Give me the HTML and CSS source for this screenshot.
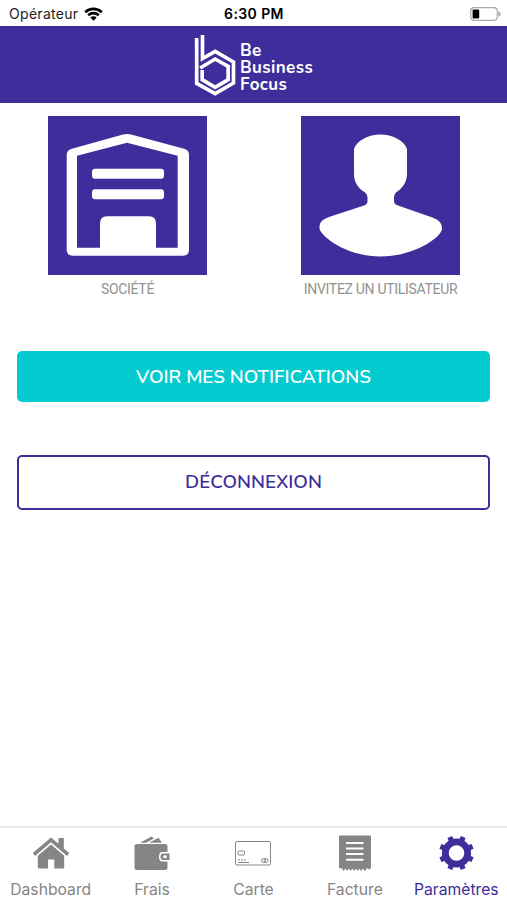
FILE: index.html
```html
<!DOCTYPE html>
<html lang="fr">
<head>
    <meta charset="UTF-8">
    <meta name="viewport" content="width=device-width, initial-scale=1.0">
    <title>Be Business Focus</title>
    <link rel="stylesheet" href="styles.css">
</head>
<body>

    <div class="status-bar">
        <div class="carrier">
            <span>Opérateur</span>
            <svg class="wifi" viewBox="0 0 19 14">
                <path d="M1.2 5.2a12 12 0 0 1 16.6 0M4.2 8.2a7.8 7.8 0 0 1 10.6 0"/>
                <path class="wifi-dot" d="M9.5 13.7L6.3 10.6a4.6 4.6 0 0 1 6.4 0z"/>
            </svg>
        </div>
        <div class="time">6:30 PM</div>
        <svg class="battery" viewBox="0 0 32 14">
            <rect x="1.7" y=".7" width="26.6" height="12.6" rx="3.5" fill="#fff" stroke="#aaa" stroke-width="1.2"/>
            <rect x="3.6" y="2.6" width="6.6" height="8.8" rx="1" fill="#000"/>
            <path d="M29.3 4.2q2.6 1 2.6 2.8t-2.6 2.8z" fill="#aaa"/>
        </svg>
    </div>

    <header class="header">
        <svg class="logo" viewBox="585 100 125 186">
            <path d="M592.5 112V248L648 279L703 247V184L648 152L610 174V103"/>
            <path d="M603 202L648 175L687 197V237L648 260L609 237V208"/>
        </svg>
        <div class="brand">
            <span>Be</span>
            <span>Business</span>
            <span>Focus</span>
        </div>
    </header>

    <main class="content">
        <div class="tiles">
            <a class="tile">
                <svg class="tile-icon" viewBox="0 0 159 159">
                    <path fill-rule="evenodd" d="M18.700 39Q18.700 34.500 23 33L75 18.500Q79 17.400 83 18.500L137 33Q141 34.500 141 39V134Q141 139.700 135 139.700H25Q18.700 139.700 18.700 134ZM29 39.700V131.700H129.700V39.700L79 26.700Z"/>
                    <rect x="44" y="52.700" width="72" height="10" rx="3"/>
                    <rect x="44" y="73.300" width="72" height="10" rx="3"/>
                    <path d="M52 134V107.500Q52 100.300 59 100.300H101Q108 100.300 108 107.500V134Z"/>
                </svg>
                <span class="tile-label">SOCIÉTÉ</span>
            </a>
            <a class="tile">
                <svg class="tile-icon" viewBox="0 0 159 159">
                    <path d="M53 33C56 24 68 18.500 79.500 18.500S103 24 106 33V58C106 66 101 73 95.500 76Q93 78 93 81V85Q93 88 97 89.500L127 100C136 103 141 105 141 113C141 120 115 140.500 79.500 140.500S18.500 119 18.500 112C18.500 105 22 103 31 100L63 89.500Q66.500 88 66.500 85V81Q66.500 78 63.500 76C57 72 53 66 53 58Z"/>
                </svg>
                <span class="tile-label">INVITEZ UN UTILISATEUR</span>
            </a>
        </div>

        <button class="btn btn-notifications">VOIR MES NOTIFICATIONS</button>
        <button class="btn btn-logout">DÉCONNEXION</button>
    </main>

    <nav class="tab-bar">
        <a class="tab">
            <svg class="tab-icon" viewBox="0 0 38 38">
                <path d="M.8 19L19 3.500L26.500 9.800V4H31.800V14.500L37.200 19L35 22L19 8.300L3 22Z"/>
                <path d="M5.800 21.800L19 10.500L32.200 21.800V33Q32.200 34.500 30.700 34.500H22.300V25.500H16V34.500H7.300Q5.800 34.500 5.800 33Z"/>
            </svg>
            <span>Dashboard</span>
        </a>
        <a class="tab">
            <svg class="tab-icon" viewBox="0 0 38 38">
                <path d="M7 8.800L18.500 2.500L21 4.500L13 8.800Z"/>
                <path d="M16 8.800L25.500 3.800L29 8.800Z"/>
                <path d="M4 10H32Q34.500 10 34.500 12.500V18H29.500Q26 18 26 22.800T29.500 27.500H34.500V33.500Q34.500 36 32 36H4Q1.500 36 1.500 33.500V12.500Q1.500 10 4 10Z"/>
                <path d="M30 19.500H36.500V26H30Q27.500 26 27.500 22.800T30 19.500Z"/>
                <rect x="30.300" y="21.300" width="3.500" height="3" rx="1.200" fill="#fff"/>
            </svg>
            <span>Frais</span>
        </a>
        <a class="tab">
            <svg class="tab-icon" viewBox="0 0 38 38">
                <g fill="none" stroke="#858585" stroke-width="1">
                    <rect x="1.500" y="7.500" width="35" height="23.500" rx="1.500"/>
                    <rect x="4" y="17" width="6.500" height="4" rx="1"/>
                    <circle cx="29.500" cy="26.500" r="2"/>
                    <circle cx="32" cy="26.500" r="2"/>
                    <path d="M4 26H6M7 26H9M10 26H12M4 28.500H15"/>
                </g>
            </svg>
            <span>Carte</span>
        </a>
        <a class="tab">
            <svg class="tab-icon" viewBox="0 0 38 38">
                <path d="M4 1.500H34Q35 1.500 35 2.500V34L33 35.500L31 34L30 36L28.500 37L27 34.500L25 37L23.500 34.500L21.500 37L20 34.500L18 37L16.500 34.500L14.500 37L13 34.500L11 37L9.500 34.500L7.500 37L6 34.500L3 34V2.500Q3 1.500 4 1.500Z"/>
                <path d="M10 9H27.500M10 14.500H27.500M10 20H27.500M10 25.800H27.500" stroke="#fff" stroke-width="2"/>
            </svg>
            <span>Facture</span>
        </a>
        <a class="tab active">
            <svg class="tab-icon" viewBox="0 0 38 38">
                <circle cx="19.500" cy="19" r="11.200" fill="none" stroke="#3d2e9c" stroke-width="6.800"/>
                <path d="M14.500 7L12.800 2.900M24.500 7L26.200 2.900M14.500 31L12.800 35.100M24.500 31L26.200 35.100M7.500 14L3.400 12.300M7.500 24L3.400 25.700M31.500 14L35.600 12.300M31.500 24L35.600 25.700" stroke="#3d2e9c" stroke-width="5.200"/>
            </svg>
            <span>Paramètres</span>
        </a>
    </nav>

</body>
</html>
```

FILE: styles.css
```css
* { box-sizing: border-box; }
body { margin: 0; height: 900px; display: flex; flex-direction: column; background: #fff; font-family: Inter, sans-serif; overflow: hidden; }

.status-bar { height: 26px; display: grid; grid-template-columns: 1fr auto 1fr; align-items: center; padding: 1px 6px 0 9px; font-size: 14px; color: #222; }
.carrier { display: flex; align-items: center; gap: 6px; letter-spacing: 0.3px; }
.wifi { width: 19px; height: 14px; fill: none; stroke: #000; stroke-width: 2.6; }
.wifi-dot { fill: #000; stroke: none; }
.time { font-weight: 600; color: #000; letter-spacing: 0.4px; margin-left: -2px; }
.battery { width: 32px; height: 14px; justify-self: end; }

.header { height: 77px; display: flex; justify-content: center; background: #3d2e9c; padding-top: 8px; gap: 4px; }
.logo { width: 42px; height: 62px; fill: none; stroke: #fff; stroke-width: 11; }
.brand { display: flex; flex-direction: column; color: #fff; font-family: Nunito, Lato, sans-serif; font-weight: 700; font-size: 17px; line-height: 17px; padding-top: 8px; width: 73px; letter-spacing: 0.4px; }

.content { flex: 1; padding: 13px 17px 0; }
.tiles { display: grid; grid-template-columns: 159px 159px; justify-content: center; column-gap: 94px; margin-left: 1px; }
.tile { display: flex; flex-direction: column; align-items: center; }
.tile-icon { width: 159px; height: 159px; background: #3d2e9c; fill: #fff; }
.tile-label { font-family: Roboto, sans-serif; font-size: 14px; line-height: 16px; margin-top: 6px; color: #929292; letter-spacing: -0.3px; white-space: nowrap; }

.btn { display: block; width: 100%; font-family: Nunito, Lato, sans-serif; font-weight: 650; font-size: 18.8px; border-radius: 5px; }
.btn-notifications { height: 51px; margin-top: 54px; border: none; background: #04cbcf; color: #fff; }
.btn-logout { height: 55px; margin-top: 53px; padding-bottom: 2px; border: 2px solid #3d2e9c; background: #fff; color: #3d2e9c; }

.tab-bar { height: 74px; display: grid; grid-template-columns: repeat(5, 1fr); border-top: 2px solid #e9e9e9; }
.tab { display: flex; flex-direction: column; align-items: center; font-size: 15.7px; line-height: 20px; color: #858585; padding-top: 6px; }
.tab-icon { width: 38px; height: 38px; fill: #858585; margin-bottom: 8px; }
.tab.active { color: #3d2e9c; }
```
